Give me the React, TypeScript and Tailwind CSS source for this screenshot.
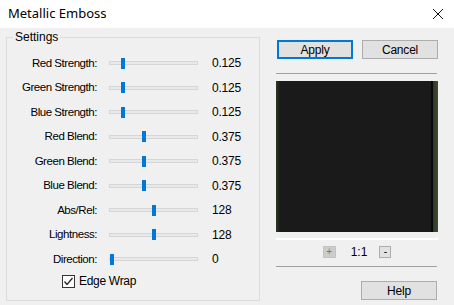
import React from "react";

const rows = [
  { label: "Red Strength:", value: "0.125", pos: 12 },
  { label: "Green Strength:", value: "0.125", pos: 12 },
  { label: "Blue Strength:", value: "0.125", pos: 12 },
  { label: "Red Blend:", value: "0.375", pos: 33 },
  { label: "Green Blend:", value: "0.375", pos: 33 },
  { label: "Blue Blend:", value: "0.375", pos: 33 },
  { label: "Abs/Rel:", value: "128", pos: 43 },
  { label: "Lightness:", value: "128", pos: 43 },
  { label: "Direction:", value: "0", pos: 1 },
];

function Slider({ pos }: { pos: number }) {
  return (
    <div className="relative w-[89px] h-[11px] flex items-center">
      <div className="w-full h-[4px] bg-[#e7eaea] border border-[#d6d6d6]" />
      <div
        className="absolute top-0 w-[4px] h-[11px] bg-[#0078d7]"
        style={{ left: pos }}
      />
    </div>
  );
}

function Btn({ children, active }: { children: React.ReactNode; active?: boolean }) {
  return (
    <div
      className={
        "w-[76px] h-[19px] flex items-center justify-center bg-[#e1e1e1] text-[12px] tracking-[-0.2px] text-black " +
        (active ? "border-2 border-[#0078d7]" : "border border-[#adadad]")
      }
    >
      {children}
    </div>
  );
}

export default function App() {
  return (
    <div
      className="w-[454px] h-[305px] flex flex-col bg-white overflow-hidden"
      style={{ fontFamily: '"Liberation Sans", Arial, sans-serif' }}
    >
      {/* title bar */}
      <div className="h-[28px] flex items-center justify-between pl-[8px] pr-[8px] bg-white">
        <span className="text-[13px] text-black" style={{ fontFamily: '"Noto Sans", sans-serif' }}>
          Metallic Emboss
        </span>
        <svg width="12" height="12" viewBox="0 0 12 12" className="mr-[2px]">
          <path d="M1 1 L11 11 M11 1 L1 11" stroke="#111" strokeWidth="1" />
        </svg>
      </div>

      <div className="flex-1 bg-[#f0f0f0] flex pl-[6px]">
        {/* Settings group */}
        <div className="relative mt-[9px] w-[254px] h-[264px] border border-[#dcdcdc] pt-[13px]">
          <span className="absolute -top-[8px] left-[6px] px-[2px] bg-[#f0f0f0] text-[12px] text-black leading-[15px]">
            Settings
          </span>
          {rows.map((r) => (
            <div key={r.label} className="h-[24.5px] flex items-center text-[11.5px] tracking-[-0.45px] text-black">
              <div className="w-[90px] text-right">{r.label}</div>
              <div className="ml-[12px]">
                <Slider pos={r.pos} />
              </div>
              <div className="ml-[14px] text-[12px] tracking-[-0.2px]">{r.value}</div>
            </div>
          ))}
          <div className="h-[19px] flex items-center pl-[55px] text-[12px] tracking-[-0.3px] text-black">
            <div className="w-[13px] h-[13px] border border-[#333] bg-white flex items-center justify-center">
              <svg width="11" height="11" viewBox="0 0 11 11">
                <path d="M1.5 5.5 L4 8.5 L9.5 2" fill="none" stroke="#222" strokeWidth="1.3" />
              </svg>
            </div>
            <span className="ml-[4px]">Edge Wrap</span>
          </div>
        </div>

        {/* right panel */}
        <div className="ml-[16px] w-[162px] flex flex-col">
          <div className="mt-[12px] flex gap-[9px] pl-[1px]">
            <Btn active>Apply</Btn>
            <Btn>Cancel</Btn>
          </div>
          <div className="mt-[14px] h-[1px] bg-[#a0a0a0] w-[161px]" />
          <div className="mt-[7px] h-[151px] bg-[#1a1a1a] flex justify-between">
            <div className="w-[4px] h-full bg-gradient-to-r from-[#2c3a24] to-[#1a1a1a]" />
            <div className="w-[7px] h-full flex">
              <div className="w-[2px] bg-[#0a0a0a]" />
              <div className="w-[5px] bg-gradient-to-r from-[#2e3a26] to-[#3e4d30]" />
            </div>
          </div>
          <div className="mt-[6px] h-[2px] bg-white" />
          <div className="mt-[6px] h-[12px] flex items-center justify-center text-[12px] text-black">
            <div className="w-[13px] h-[12px] bg-[#cccccc] border border-[#c4c4c4] flex items-center justify-center text-[10px] text-[#777] leading-none">
              +
            </div>
            <span className="ml-[15px] mr-[12px]">1:1</span>
            <div className="w-[12px] h-[12px] bg-[#e1e1e1] border border-[#adadad] flex items-center justify-center text-[10px] leading-none">
              -
            </div>
          </div>
          <div className="mt-[8px] h-[1px] bg-[#a0a0a0] w-[161px]" />
          <div className="mt-[14px] flex justify-end pr-[1px]">
            <Btn>Help</Btn>
          </div>
        </div>
      </div>
    </div>
  );
}
